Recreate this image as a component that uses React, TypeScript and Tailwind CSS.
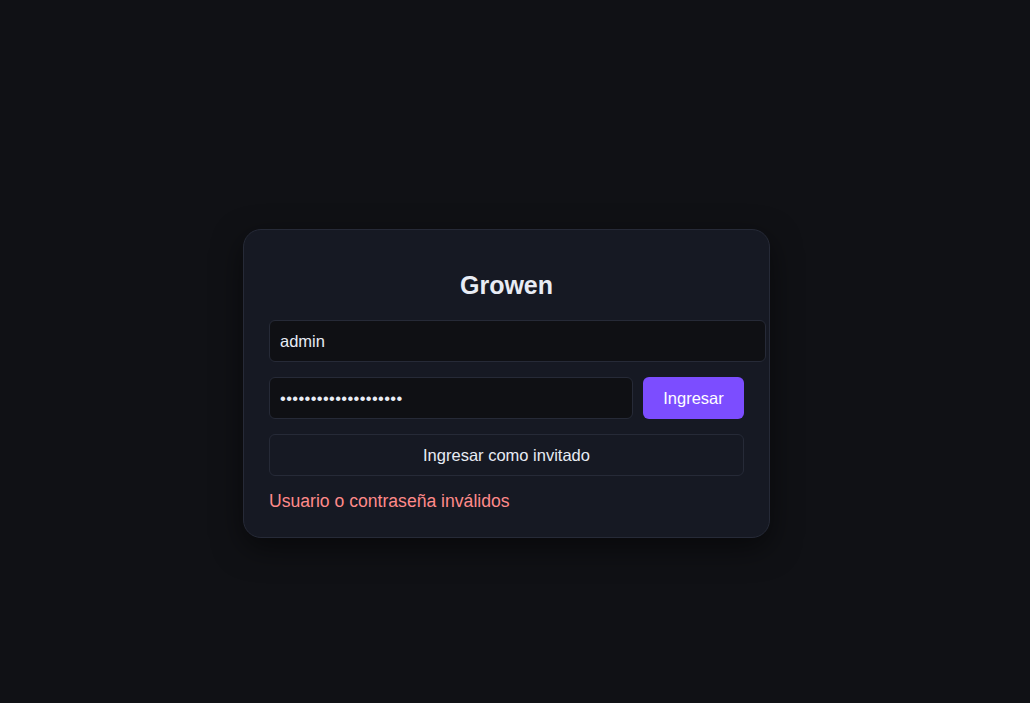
import React, { useState } from "react";

const font = { fontFamily: '"Liberation Sans", Arial, sans-serif' };

export default function App() {
  const [user, setUser] = useState("admin");
  const [pass, setPass] = useState("xxxxxxxxxxxxxxxxxxxx");

  return (
    // Page: dark background, card placed a bit left/down of centre like the reference
    <div
      className="min-h-screen w-full bg-[#101115] flex justify-center items-start pt-[229px] pr-[17px]"
      style={font}
    >
      <div className="w-[527px] rounded-[18px] border border-[#262a37] bg-[#161923] px-[25px] pt-[41px] pb-[24px] shadow-[0_10px_30px_rgba(0,0,0,0.5)]">
        <h1 className="text-center text-[25px] leading-[28px] font-bold text-[#e8ecf4]">
          Growen
        </h1>

        <form className="mt-[21px] flex flex-col gap-[15px]" onSubmit={(e) => e.preventDefault()}>
          {/* username input overflows the card content like the original */}
          <input
            value={user}
            onChange={(e) => setUser(e.target.value)}
            className="box-content w-full h-[40px] px-[10px] rounded-[6px] border border-[#262a37] bg-[#0f1014] text-[16.5px] text-[#e8ecf4] outline-none"
          />

          <div className="flex gap-[10px]">
            <input
              type="password"
              value={pass}
              onChange={(e) => setPass(e.target.value)}
              className="flex-1 min-w-0 h-[42px] px-[10px] rounded-[6px] border border-[#262a37] bg-[#0f1014] text-[16.5px] tracking-[0.35px] text-[#e8ecf4] outline-none"
            />
            <button
              type="submit"
              className="w-[101px] h-[42px] rounded-[6px] bg-[#7c4dff] text-[16.5px] text-white"
            >
              Ingresar
            </button>
          </div>

          <button
            type="button"
            className="w-full h-[42px] rounded-[6px] border border-[#262a37] bg-[#161923] text-[16.5px] text-[#e8ecf4]"
          >
            Ingresar como invitado
          </button>
        </form>

        <p className="mt-[13px] text-[17.6px] leading-[24px] text-[#ff8a8a]">
          Usuario o contraseña inválidos
        </p>
      </div>
    </div>
  );
}
